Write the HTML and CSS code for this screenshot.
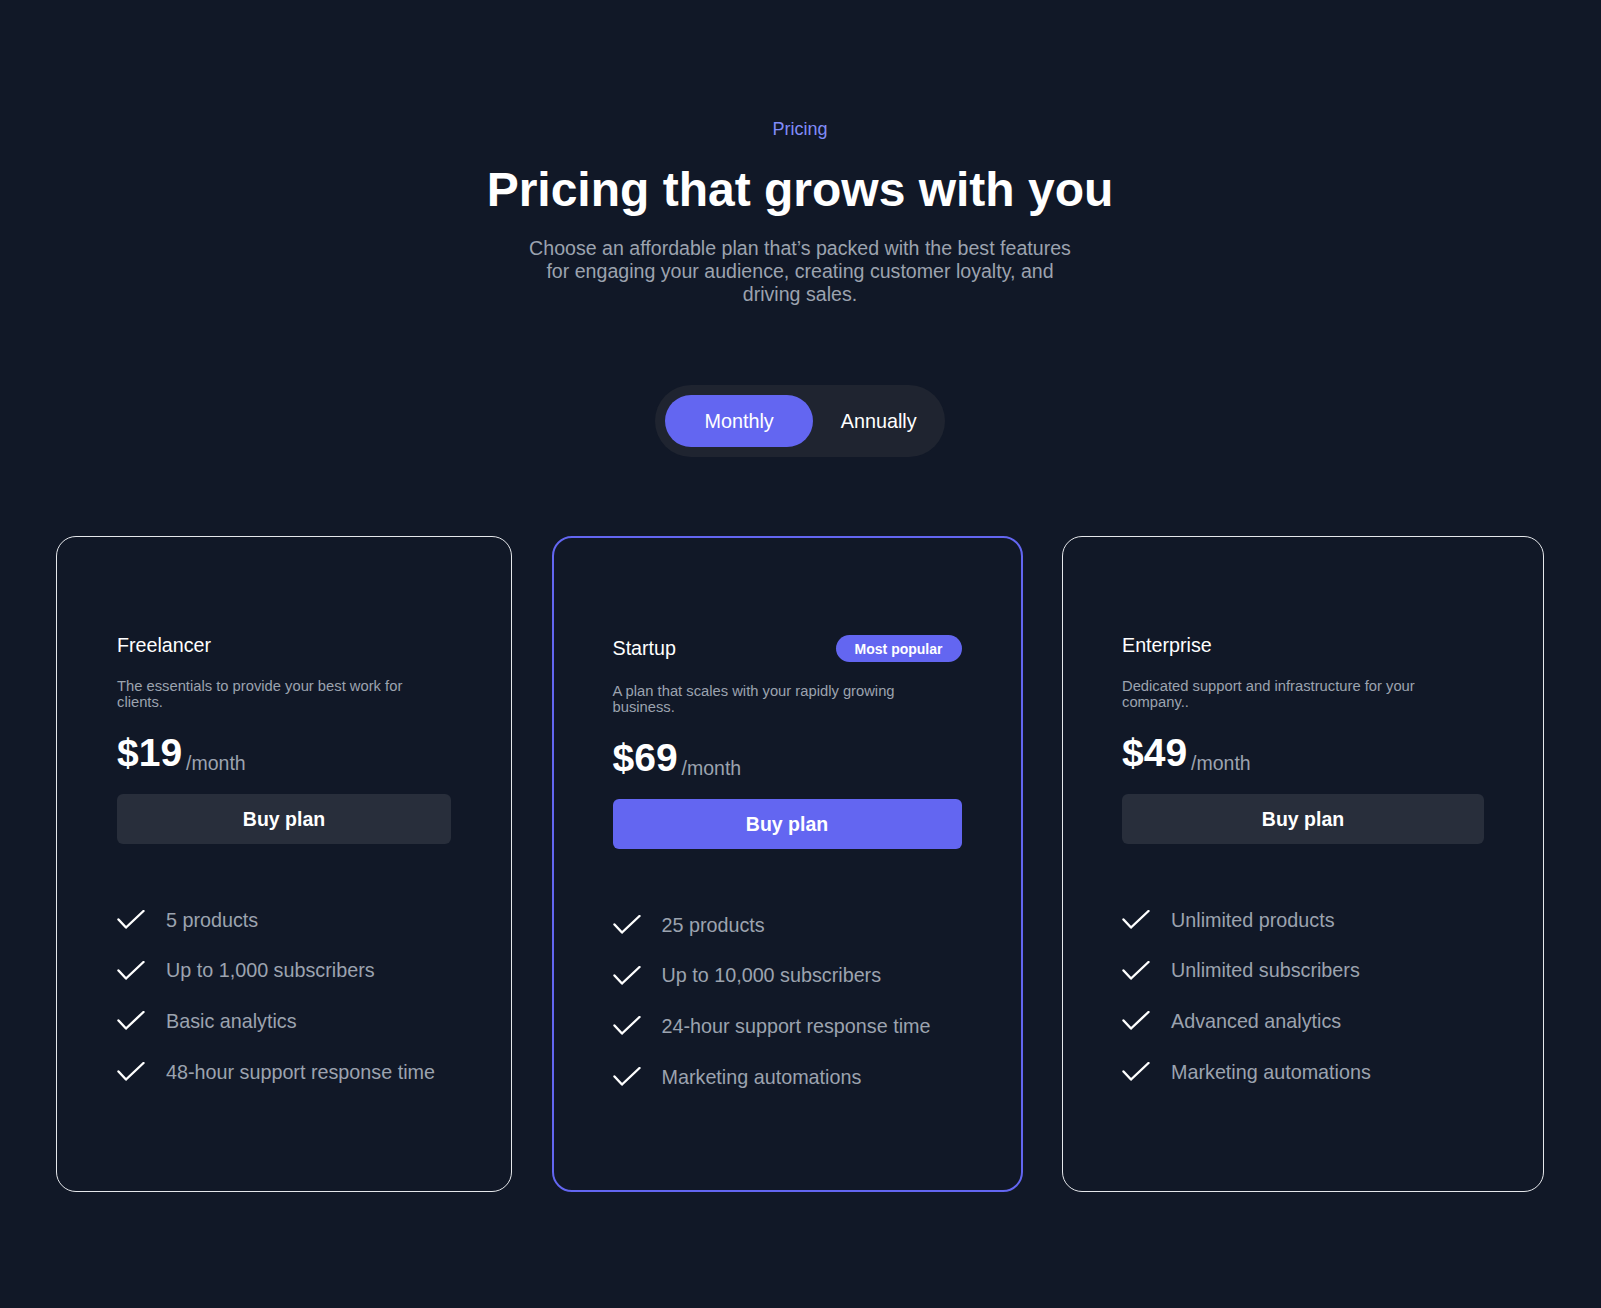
FILE: index.html
```html
<!DOCTYPE html>
<html lang="en">
<head>
<meta charset="utf-8">
<title>Pricing</title>
<link rel="stylesheet" href="styles.css">
</head>
<body>
<section class="pricing">
  <header class="intro">
    <p class="eyebrow">Pricing</p>
    <h1 class="title">Pricing that grows with you</h1>
    <p class="lead">Choose an affordable plan that’s packed with the best features for engaging your audience, creating customer loyalty, and driving sales.</p>
  </header>

  <div class="toggle">
    <button class="toggle-btn active">Monthly</button>
    <button class="toggle-btn">Annually</button>
  </div>

  <div class="plans">
    <article class="plan plan-1">
      <div class="plan-head"><h3 class="plan-name">Freelancer</h3></div>
      <p class="plan-desc">The essentials to provide your best work for clients.</p>
      <p class="price"><span class="amount">$19</span><span class="per">/month</span></p>
      <a class="buy">Buy plan</a>
      <ul class="features">
        <li><svg class="check" viewBox="0 0 28 20"><polyline points="1.5,9.5 9,17.5 26.5,1"/></svg><span>5 products</span></li>
        <li><svg class="check" viewBox="0 0 28 20"><polyline points="1.5,9.5 9,17.5 26.5,1"/></svg><span>Up to 1,000 subscribers</span></li>
        <li><svg class="check" viewBox="0 0 28 20"><polyline points="1.5,9.5 9,17.5 26.5,1"/></svg><span>Basic analytics</span></li>
        <li><svg class="check" viewBox="0 0 28 20"><polyline points="1.5,9.5 9,17.5 26.5,1"/></svg><span>48-hour support response time</span></li>
      </ul>
    </article>

    <article class="plan plan-2 featured">
      <div class="plan-head"><h3 class="plan-name">Startup</h3><span class="badge">Most popular</span></div>
      <p class="plan-desc">A plan that scales with your rapidly growing business.</p>
      <p class="price"><span class="amount">$69</span><span class="per">/month</span></p>
      <a class="buy buy-primary">Buy plan</a>
      <ul class="features">
        <li><svg class="check" viewBox="0 0 28 20"><polyline points="1.5,9.5 9,17.5 26.5,1"/></svg><span>25 products</span></li>
        <li><svg class="check" viewBox="0 0 28 20"><polyline points="1.5,9.5 9,17.5 26.5,1"/></svg><span>Up to 10,000 subscribers</span></li>
        <li><svg class="check" viewBox="0 0 28 20"><polyline points="1.5,9.5 9,17.5 26.5,1"/></svg><span>24-hour support response time</span></li>
        <li><svg class="check" viewBox="0 0 28 20"><polyline points="1.5,9.5 9,17.5 26.5,1"/></svg><span>Marketing automations</span></li>
      </ul>
    </article>

    <article class="plan plan-3">
      <div class="plan-head"><h3 class="plan-name">Enterprise</h3></div>
      <p class="plan-desc">Dedicated support and infrastructure for your company..</p>
      <p class="price"><span class="amount">$49</span><span class="per">/month</span></p>
      <a class="buy">Buy plan</a>
      <ul class="features">
        <li><svg class="check" viewBox="0 0 28 20"><polyline points="1.5,9.5 9,17.5 26.5,1"/></svg><span>Unlimited products</span></li>
        <li><svg class="check" viewBox="0 0 28 20"><polyline points="1.5,9.5 9,17.5 26.5,1"/></svg><span>Unlimited subscribers</span></li>
        <li><svg class="check" viewBox="0 0 28 20"><polyline points="1.5,9.5 9,17.5 26.5,1"/></svg><span>Advanced analytics</span></li>
        <li><svg class="check" viewBox="0 0 28 20"><polyline points="1.5,9.5 9,17.5 26.5,1"/></svg><span>Marketing automations</span></li>
      </ul>
    </article>
  </div>
</section>
</body>
</html>
```

FILE: styles.css
```css
* { box-sizing: border-box; }

html, body {
  margin: 0;
  padding: 0;
  background: #111827;
  font-family: "Liberation Sans", Arial, sans-serif;
  color: #ffffff;
}

.pricing {
  display: flex;
  flex-direction: column;
  align-items: center;
  padding: 117px 1px 118px 0;
}

.intro {
  display: flex;
  flex-direction: column;
  align-items: center;
  text-align: center;
}

.eyebrow {
  margin: 0;
  font-size: 18px;
  line-height: 24px;
  color: #818cf8;
}

.title {
  margin: 20px 0 0;
  font-size: 48px;
  line-height: 58px;
  font-weight: 700;
  color: #ffffff;
}

.lead {
  margin: 18px 0 0;
  max-width: 560px;
  font-size: 19.6px;
  line-height: 23px;
  color: #9ca3af;
}

.toggle {
  margin-top: 79px;
  display: flex;
  gap: 10px;
  padding: 10px;
  background: #1f2430;
  border-radius: 999px;
}

.toggle-btn {
  height: 52px;
  padding: 0 18px;
  border: 0;
  border-radius: 999px;
  background: transparent;
  color: #ffffff;
  font-family: inherit;
  font-size: 19.8px;
}

.toggle-btn.active {
  padding: 0 39px;
  background: #6366f1;
}

.plans {
  margin-top: 79px;
  display: grid;
  grid-template-columns: 456px 471px 482px;
  column-gap: 39.5px;
}

.plan {
  display: flex;
  flex-direction: column;
  padding: 97px 60px 99px;
  border: 1px solid #e5e7eb;
  border-radius: 20px;
}

.plan-3 { padding-left: 59px; padding-right: 59px; }

.featured {
  border: 2px solid #6366f1;
  padding: 97px 59px 99px;
}

.plan-head {
  display: flex;
  align-items: center;
  justify-content: space-between;
}

.plan-name {
  margin: 0;
  font-size: 19.7px;
  font-weight: 400;
  line-height: normal;
  color: #ffffff;
}

.badge {
  height: 27px;
  display: flex;
  align-items: center;
  padding: 0 19px;
  border-radius: 999px;
  background: #6366f1;
  color: #ffffff;
  font-size: 14px;
  font-weight: 700;
}

.plan-desc {
  margin: 21px 0 0;
  padding-right: 20px;
  font-size: 14.75px;
  line-height: 16px;
  color: #9ca3af;
}

.price {
  margin: 21px 0 0;
  display: flex;
  align-items: flex-end;
  gap: 4px;
}

.amount {
  font-size: 39px;
  font-weight: 700;
  color: #ffffff;
  line-height: normal;
}

.per {
  font-size: 19.5px;
  color: #9ca3af;
  line-height: normal;
}

.buy {
  margin-top: 19px;
  height: 50px;
  display: flex;
  align-items: center;
  justify-content: center;
  border-radius: 6px;
  background: #282e3b;
  color: #ffffff;
  font-size: 19.5px;
  font-weight: 700;
}

.buy-primary { background: #6366f1; }

.features {
  list-style: none;
  margin: 62px 0 0;
  padding: 0;
  display: flex;
  flex-direction: column;
  gap: 22.7px;
}

.features li {
  display: flex;
  align-items: center;
  gap: 21px;
  height: 28px;
  font-size: 19.75px;
  color: #9ca3af;
}

.check {
  width: 28px;
  height: 20px;
  flex: none;
  fill: none;
  stroke: #ffffff;
  stroke-width: 2.4;
  stroke-linecap: round;
  stroke-linejoin: round;
}
```
